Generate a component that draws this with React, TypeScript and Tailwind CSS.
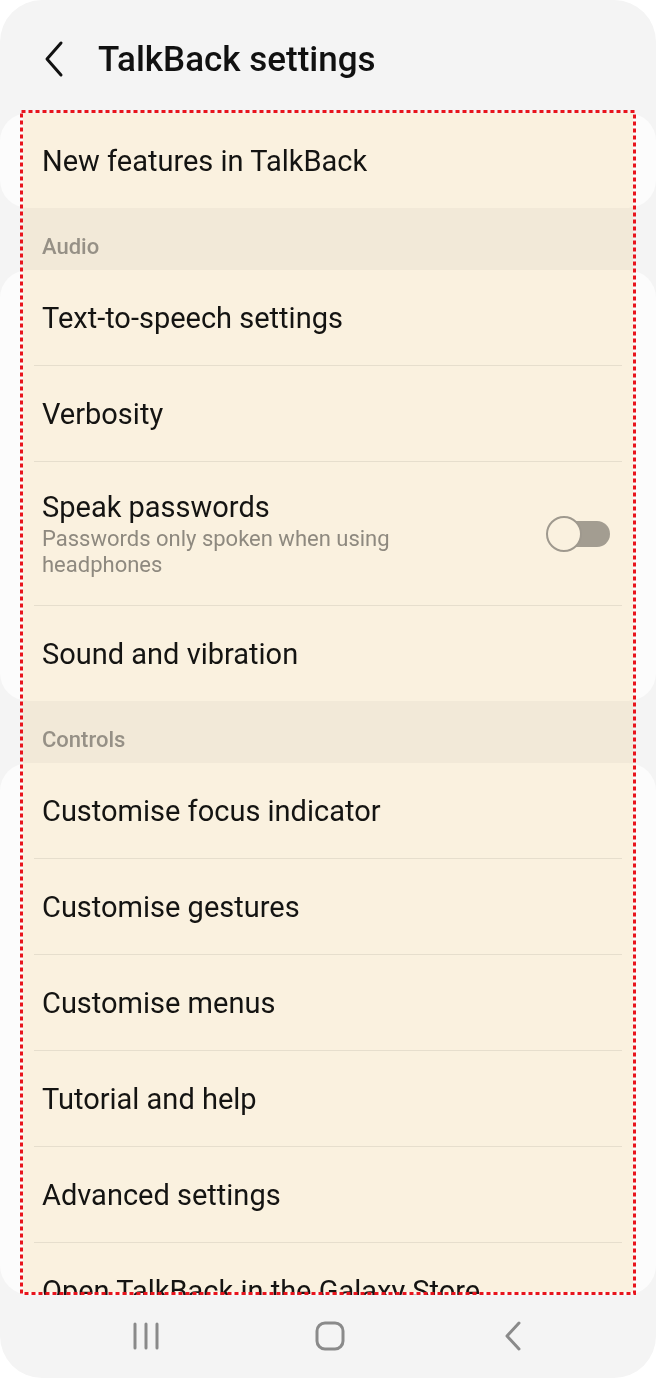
import React from "react"

const font = { fontFamily: "Roboto, 'Noto Sans', Arial, sans-serif" }

function Divider() {
  return <div className="mx-[34px] h-px bg-[#e8e8e8]" />
}

function Row({ title, last }: { title: string; last?: boolean }) {
  return (
    <>
      <div className="flex h-[95px] items-center px-[42px]">
        <span className="whitespace-nowrap text-[29px] leading-[34px] text-[#141414]">{title}</span>
      </div>
      {!last && <Divider />}
    </>
  )
}

function SectionLabel({ label }: { label: string }) {
  return (
    <div className="flex h-[62px] items-end px-[42px] pb-[10px]">
      <span className="text-[22px] font-medium leading-[26px] text-[#979797]">{label}</span>
    </div>
  )
}

function Toggle() {
  return (
    <div className="relative h-[38px] w-[64px] shrink-0">
      <div className="absolute right-0 top-[6px] h-[26px] w-[50px] rounded-full bg-[#a4a4a4]" />
      <div className="absolute left-0 top-[1px] h-[36px] w-[36px] rounded-full border-2 border-[#a0a0a0] bg-[#fcfcfc]" />
    </div>
  )
}

function NavBar() {
  return (
    <div className="flex h-[83px] items-center pb-[2px] pl-[131px]">
      <svg width="30" height="30" viewBox="0 0 30 30">
        <g stroke="#8a8a8a" strokeWidth="3" strokeLinecap="round">
          <line x1="4" y1="3" x2="4" y2="27" />
          <line x1="15" y1="3" x2="15" y2="27" />
          <line x1="26" y1="3" x2="26" y2="27" />
        </g>
      </svg>
      <svg width="30" height="30" viewBox="0 0 30 30" className="ml-[154px]">
        <rect x="2" y="2" width="26" height="26" rx="8" fill="none" stroke="#8a8a8a" strokeWidth="3" />
      </svg>
      <svg width="20" height="32" viewBox="0 0 20 32" className="ml-[158px]">
        <path d="M16 3 L4 16 L16 29" fill="none" stroke="#8a8a8a" strokeWidth="3" strokeLinecap="round" strokeLinejoin="round" />
      </svg>
    </div>
  )
}

export default function App() {
  return (
    <div className="bg-white" style={font}>
      <div className="relative flex h-[1378px] w-[656px] flex-col overflow-hidden rounded-[42px] bg-[#f4f4f4]">
        {/* header */}
        <div className="flex h-[113px] shrink-0 items-start gap-[32px] pl-[42px] pt-[39px]">
          <svg width="24" height="40" viewBox="0 0 24 40">
            <path d="M19 4 L5 20 L19 36" fill="none" stroke="#111" strokeWidth="3" strokeLinecap="round" strokeLinejoin="round" />
          </svg>
          <h1 className="whitespace-nowrap text-[35px] font-medium leading-[42px] text-[#111]">TalkBack settings</h1>
        </div>

        {/* scroll area */}
        <div className="flex-1 overflow-hidden rounded-b-[30px]">
          <div className="rounded-[28px] bg-[#fcfcfc]">
            <Row title="New features in TalkBack" last />
          </div>

          <SectionLabel label="Audio" />
          <div className="rounded-[28px] bg-[#fcfcfc]">
            <Row title="Text-to-speech settings" />
            <Row title="Verbosity" />
            <div className="flex h-[143px] items-center justify-between pl-[42px] pr-[46px]">
              <div className="flex flex-col">
                <span className="text-[29px] leading-[34px] text-[#141414]">Speak passwords</span>
                <span className="mt-[2px] w-[390px] text-[22px] leading-[26px] text-[#8f8f8f]">
                  Passwords only spoken when using headphones
                </span>
              </div>
              <Toggle />
            </div>
            <Divider />
            <Row title="Sound and vibration" last />
          </div>

          <SectionLabel label="Controls" />
          <div className="rounded-[28px] bg-[#fcfcfc] pb-[40px]">
            <Row title="Customise focus indicator" />
            <Row title="Customise gestures" />
            <Row title="Customise menus" />
            <Row title="Tutorial and help" />
            <Row title="Advanced settings" />
            <Row title="Open TalkBack in the Galaxy Store" last />
          </div>
        </div>

        <NavBar />

        {/* focus highlight */}
        <div className="pointer-events-none absolute left-[20px] top-[110px] h-[1185px] w-[616px]">
          <div className="absolute inset-[3px] bg-[#fdf4e2] mix-blend-multiply" />
          <svg className="absolute inset-0" width="616" height="1185">
            <rect x="1.5" y="1.5" width="613" height="1182" fill="none" stroke="#e8141c" strokeWidth="3" strokeDasharray="4 3" />
          </svg>
        </div>
      </div>
    </div>
  )
}
